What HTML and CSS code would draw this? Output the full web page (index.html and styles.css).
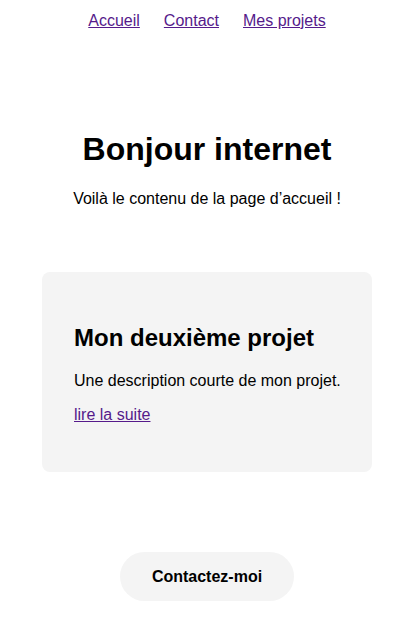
FILE: index.html
```html
<!DOCTYPE html>
<html lang="fr">
<head>
<meta charset="utf-8">
<title>Accueil</title>
<link rel="stylesheet" href="styles.css">
</head>
<body>
<nav class="nav">
  <a href="#" class="nav-link">Accueil</a>
  <a href="#" class="nav-link">Contact</a>
  <a href="#" class="nav-link">Mes projets</a>
</nav>
<main class="main">
  <section class="hero">
    <h1 class="hero-title">Bonjour internet</h1>
    <p class="hero-text">Voilà le contenu de la page d’accueil !</p>
  </section>
  <article class="card">
    <h2 class="card-title">Mon deuxième projet</h2>
    <p class="card-text">Une description courte de mon projet.</p>
    <p class="card-text"><a href="#" class="card-link">lire la suite</a></p>
  </article>
  <div class="cta">
    <a href="#" class="cta-button">Contactez-moi</a>
  </div>
</main>
</body>
</html>
```
FILE: styles.css
```css
html, body {
  margin: 0;
  padding: 0;
}
body {
  padding-left: 8px;
  font-family: "Liberation Sans", Arial, sans-serif;
  font-size: 16px;
  color: #000;
  background: #fff;
}
.nav {
  display: flex;
  justify-content: center;
  gap: 24px;
  padding-top: 12px;
}
.nav-link,
.card-link {
  color: #551a8b;
  text-decoration: underline;
}
.main {
  display: flex;
  flex-direction: column;
  align-items: center;
}
.hero {
  padding-top: 80px;
  text-align: center;
}
.hero-title {
  font-size: 32px;
  font-weight: bold;
  margin: 21.4px 0;
}
.hero-text {
  margin: 0;
}
.card {
  width: 330px;
  box-sizing: border-box;
  margin-top: 64px;
  padding: 32px 20px 32px 32px;
  background: #f4f4f4;
  border-radius: 8px;
}
.card-title {
  font-size: 24px;
  font-weight: bold;
  margin: 20px 0;
}
.card-text {
  margin: 16px 0;
}
.cta {
  margin-top: 80px;
}
.cta-button {
  display: inline-block;
  padding: 15px 32px;
  line-height: 19px;
  background: #f4f4f4;
  border-radius: 999px;
  color: #000;
  font-weight: bold;
  text-decoration: none;
}
```
